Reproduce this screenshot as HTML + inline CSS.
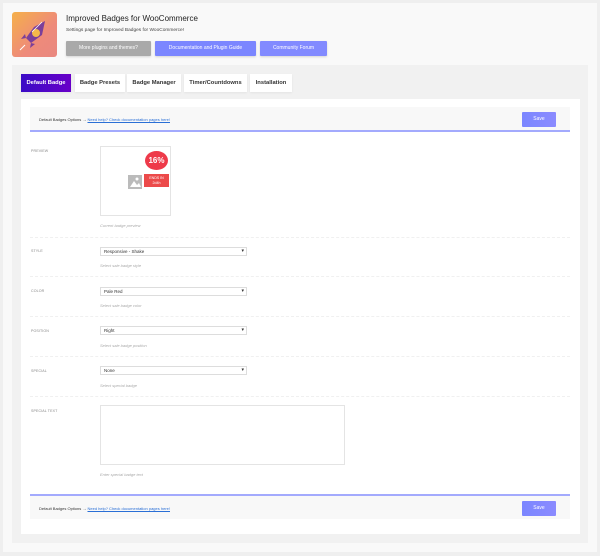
<!DOCTYPE html>
<html><head><style>
*{margin:0;padding:0;box-sizing:border-box}
body{width:600px;height:556px;background:#efefef;font-family:"Liberation Sans",sans-serif;position:relative;overflow:hidden}
.a{position:absolute}
.btn{position:absolute;top:41px;height:15px;color:#fff;font-size:5px;text-align:center;line-height:15px;border-radius:1px;box-shadow:0 1px 2px rgba(0,0,0,.15)}
.tab{position:absolute;top:74px;height:18px;background:#fff;font-size:5.8px;font-weight:bold;color:#333;text-align:center;line-height:18px;box-shadow:0 1px 2px rgba(0,0,0,.06)}
.lbl{position:absolute;left:31px;font-size:3.6px;color:#888;letter-spacing:.1px}
.sel{position:absolute;left:100px;width:147px;height:9px;border:1px solid #ddd;background:#fff;font-size:4.5px;color:#333;line-height:7px;padding-left:3px}
.sel:after{content:"▾";position:absolute;right:2px;top:0;font-size:5px;color:#333}
.hint{position:absolute;left:100px;font-size:4px;color:#aaa;font-style:italic}
.sep{position:absolute;left:30px;width:540px;height:0;border-top:1px dashed #f0f0f0}
.bar{position:absolute;left:30px;width:540px;height:25px;background:#f8f8f8;font-size:4px;color:#333}
.bar span{position:absolute;left:9px;top:10px}
.bar u{color:#2a6fd6}
.save{position:absolute;right:14px;top:5px;width:34px;height:15px;background:linear-gradient(90deg,#7b86ff,#8b8bff);color:#fff;font-size:5px;text-align:center;line-height:15px;border-radius:1px}
</style></head><body>
<div class="a" style="left:3px;top:3px;width:594px;height:549px;background:#f9f9f9"></div>
<div class="a" style="left:12px;top:12px;width:45px;height:45px;border-radius:3px;background:linear-gradient(135deg,#f5b04a,#ee8a7a 60%,#e98880)">
<svg width="45" height="45" viewBox="0 0 45 45"><path d="M33 9 L22 15 L14 26 L19 31 L30 23 Z" fill="#7b3f9a"/><circle cx="24" cy="21" r="4" fill="#f5b94a"/><path d="M14 26 L9 27 L13 22 Z M19 31 L18 36 L23 32Z" fill="#7b3f9a"/><path d="M13 33 L8 38" stroke="#fff" stroke-width="1"/><path d="M30 10 L20 20" stroke="#fff" stroke-width=".8"/></svg></div>
<div class="a" style="left:66px;top:14px;font-size:8px;color:#222">Improved Badges for WooCommerce</div>
<div class="a" style="left:66px;top:28px;font-size:4.8px;color:#444">Settings page for Improved Badges for WooCommerce!</div>
<div class="btn" style="left:66px;width:85px;background:#a9a9a9">More plugins and themes?</div>
<div class="btn" style="left:155px;width:101px;background:#7b86ff">Documentation and Plugin Guide</div>
<div class="btn" style="left:260px;width:67px;background:#828aff">Community Forum</div>
<div class="a" style="left:12px;top:65px;width:576px;height:478px;background:#f1f1f1"></div>
<div class="tab" style="left:21px;width:50px;background:linear-gradient(90deg,#3a0bc6,#6800c8);color:#fff">Default Badge</div>
<div class="tab" style="left:75px;width:50px">Badge Presets</div>
<div class="tab" style="left:127px;width:54px">Badge Manager</div>
<div class="tab" style="left:184px;width:63px">Timer/Countdowns</div>
<div class="tab" style="left:250px;width:42px">Installation</div>
<div class="a" style="left:21px;top:99px;width:559px;height:435px;background:#fff"></div>
<div class="bar" style="top:107px;border-bottom:2px solid #a3aafd"><span>Default Badges Options → <u>Need help? Check documentation pages here!</u></span><div class="save">Save</div></div>
<div class="lbl" style="top:149px">PREVIEW</div>
<div class="a" style="left:100px;top:146px;width:71px;height:70px;border:1px solid #e4e4e4"></div>
<div class="a" style="left:128px;top:175px;width:14px;height:14px;background:#bbb"><svg width="14" height="14"><circle cx="9" cy="4" r="1.5" fill="#fff"/><path d="M2 12 L6 6 L9 10 L11 8 L13 12Z" fill="#fff"/></svg></div>
<div class="a" style="left:145px;top:151px;width:23px;height:19px;border-radius:50%;background:#ee3a4a;color:#fff;font-size:8px;font-weight:bold;text-align:center;line-height:19px">16%</div>
<div class="a" style="left:144px;top:174px;width:25px;height:13px;background:#ec4a4a;color:#fff;font-size:3.6px;text-align:center;line-height:5px;padding-top:2px">ENDS IN<br>2d4h</div>
<div class="hint" style="top:223px">Current badge preview</div>
<div class="sep" style="top:237px"></div>
<div class="lbl" style="top:249px">STYLE</div><div class="sel" style="top:247px">Responsive - Shake</div><div class="hint" style="top:263px">Select sale badge style</div>
<div class="sep" style="top:276px"></div>
<div class="lbl" style="top:289px">COLOR</div><div class="sel" style="top:287px">Pale Red</div><div class="hint" style="top:303px">Select sale badge color</div>
<div class="sep" style="top:316px"></div>
<div class="lbl" style="top:329px">POSITION</div><div class="sel" style="top:326px">Right</div><div class="hint" style="top:343px">Select sale badge position</div>
<div class="sep" style="top:356px"></div>
<div class="lbl" style="top:369px">SPECIAL</div><div class="sel" style="top:366px">None</div><div class="hint" style="top:383px">Select special badge</div>
<div class="sep" style="top:396px"></div>
<div class="lbl" style="top:409px">SPECIAL TEXT</div>
<div class="a" style="left:100px;top:405px;width:245px;height:60px;border:1px solid #e4e4e4"></div>
<div class="hint" style="top:472px">Enter special badge text</div>
<div class="bar" style="top:494px;border-top:2px solid #a3aafd"><span>Default Badges Options → <u>Need help? Check documentation pages here!</u></span><div class="save">Save</div></div>
</body></html>
